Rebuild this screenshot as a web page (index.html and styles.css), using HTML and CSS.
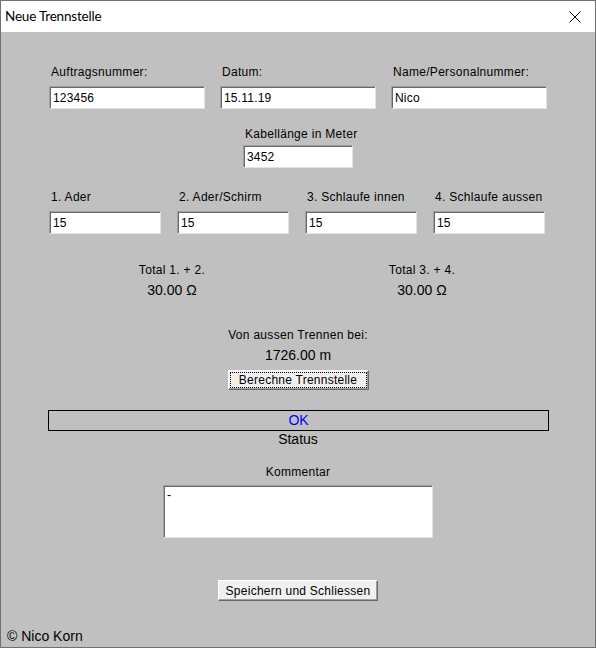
FILE: index.html
```html
<!DOCTYPE html>
<html lang="de">
<head>
<meta charset="utf-8">
<title>Neue Trennstelle</title>
<link rel="stylesheet" href="styles.css">
</head>
<body>
<div class="window">
  <div class="titlebar">
    <span class="title">Neue Trennstelle</span>
    <svg class="close" width="12" height="12" viewBox="0 0 12 12">
      <path d="M0.5 0.5 L11.5 11.5 M11.5 0.5 L0.5 11.5" stroke="#000" stroke-width="1" fill="none"/>
    </svg>
  </div>
  <div class="content">
    <div class="row-three">
      <div class="field"><label class="lbl">Auftragsnummer:</label><div class="input">123456</div></div>
      <div class="field"><label class="lbl">Datum:</label><div class="input">15.11.19</div></div>
      <div class="field"><label class="lbl">Name/Personalnummer:</label><div class="input">Nico</div></div>
    </div>
    <div class="field kabel">
      <label class="lbl">Kabellänge in Meter</label>
      <div class="input">3452</div>
    </div>
    <div class="row-four">
      <div class="field"><label class="lbl">1. Ader</label><div class="input">15</div></div>
      <div class="field"><label class="lbl">2. Ader/Schirm</label><div class="input">15</div></div>
      <div class="field"><label class="lbl">3. Schlaufe innen</label><div class="input">15</div></div>
      <div class="field"><label class="lbl">4. Schlaufe aussen</label><div class="input">15</div></div>
    </div>
    <div class="totals">
      <div class="total"><div class="lbl">Total 1. + 2.</div><div class="value">30.00 Ω</div></div>
      <div class="total"><div class="lbl">Total 3. + 4.</div><div class="value">30.00 Ω</div></div>
    </div>
    <div class="trennen">
      <div class="lbl">Von aussen Trennen bei:</div>
      <div class="value">1726.00 m</div>
      <button class="btn btn-calc">Berechne Trennstelle</button>
    </div>
    <div class="status-box">OK</div>
    <div class="status-label">Status</div>
    <div class="comment">
      <div class="lbl">Kommentar</div>
      <div class="input textarea">-</div>
    </div>
    <div class="save-row">
      <button class="btn btn-save">Speichern und Schliessen</button>
    </div>
    <div class="footer">© Nico Korn</div>
  </div>
</div>
</body>
</html>
```
FILE: styles.css
```css
html, body {
  margin: 0;
  padding: 0;
  background: #c0c0c0;
}
.window {
  width: 596px;
  height: 648px;
  box-sizing: border-box;
  border: 1px solid #707070;
  background: #c0c0c0;
  font-family: "Liberation Sans", Arial, sans-serif;
  color: #000;
  overflow: hidden;
}
.titlebar {
  height: 31px;
  background: #fff;
  display: flex;
  align-items: center;
  justify-content: space-between;
  padding-left: 4px;
}
.title {
  font-family: Lato, "Noto Sans", sans-serif;
  font-size: 13.5px;
  letter-spacing: -0.2px;
  line-height: 31px;
  color: #000;
}
.close {
  margin-right: 14px;
  margin-top: 1px;
}
.content {
  display: flex;
  flex-direction: column;
}
.lbl {
  display: block;
  font-size: 12px;
  line-height: 14px;
  letter-spacing: 0.3px;
  white-space: nowrap;
}
.field {
  display: flex;
  flex-direction: column;
  gap: 7px;
}
.field .lbl {
  padding-left: 2px;
}
.input {
  box-sizing: border-box;
  height: 23px;
  background: #fff;
  border: 1px solid;
  border-color: #a0a0a0 #e3e3e3 #e3e3e3 #a0a0a0;
  box-shadow: inset 1px 1px 0 #696969;
  font-size: 12px;
  line-height: 14px;
  letter-spacing: 0.2px;
  padding: 4px 2px 0 3px;
  white-space: nowrap;
}
.row-three {
  display: grid;
  grid-template-columns: 156px 156px 156px;
  column-gap: 15px;
  padding-left: 48px;
  margin-top: 33px;
}
.kabel {
  margin-top: 18px;
  margin-left: 242px;
  width: 110px;
  gap: 4px;
}
.row-four {
  display: grid;
  grid-template-columns: 112px 112px 112px 112px;
  column-gap: 16px;
  padding-left: 48px;
  margin-top: 22px;
}
.totals {
  display: grid;
  grid-template-columns: 246px 246px;
  column-gap: 4px;
  padding-left: 48px;
  margin-top: 29px;
}
.total {
  display: flex;
  flex-direction: column;
  align-items: center;
  gap: 5px;
}
.value {
  font-size: 14px;
  line-height: 16px;
  white-space: nowrap;
}
.trennen {
  margin-top: 30px;
  display: flex;
  flex-direction: column;
  align-items: center;
}
.trennen .value {
  margin-top: 5px;
}
.btn {
  box-sizing: border-box;
  height: 21px;
  padding: 0;
  margin: 0;
  background: #f0f0f0;
  border: 1px solid;
  border-color: #fff #696969 #696969 #fff;
  box-shadow: inset -1px -1px 0 #a0a0a0;
  font-family: "Liberation Sans", Arial, sans-serif;
  font-size: 12px;
  line-height: 16px;
  letter-spacing: 0.25px;
  color: #000;
}
.btn-calc {
  margin-top: 7px;
  height: 20px;
  width: 141px;
  outline: 1px dotted #000;
  outline-offset: -3px;
}
.status-box {
  box-sizing: border-box;
  margin-top: 20px;
  margin-left: 47px;
  width: 501px;
  height: 21px;
  border: 1px solid #000;
  color: #0000ff;
  font-size: 14px;
  line-height: 19px;
  text-align: center;
}
.status-label {
  font-size: 14px;
  line-height: 16px;
  text-align: center;
}
.comment {
  margin-top: 18px;
  display: flex;
  flex-direction: column;
  align-items: center;
  gap: 6px;
}
.textarea {
  width: 270px;
  height: 53px;
  padding: 2px 3px 0 3px;
  font-size: 12px;
}
.save-row {
  margin-top: 42px;
  display: flex;
  justify-content: center;
}
.btn-save {
  width: 160px;
}
.footer {
  margin-top: 27px;
  padding-left: 6px;
  font-size: 14px;
  line-height: 16px;
}
```
